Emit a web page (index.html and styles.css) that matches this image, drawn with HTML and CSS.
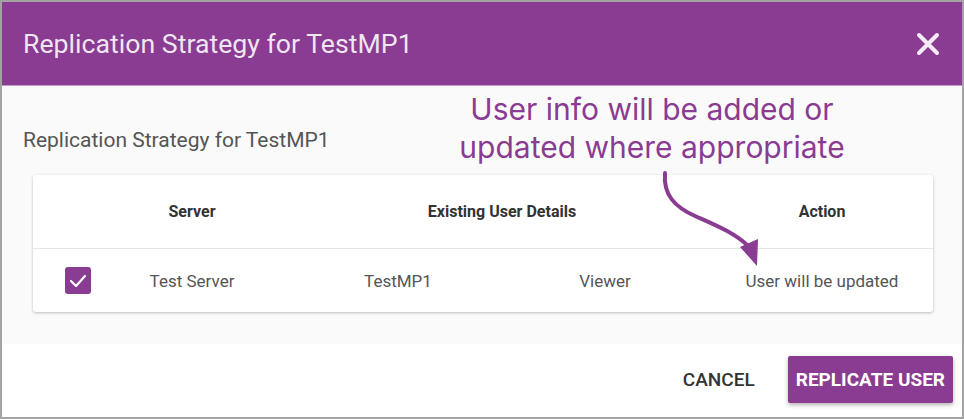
FILE: index.html
```html
<!DOCTYPE html>
<html lang="en">
<head>
  <meta charset="UTF-8">
  <title>Replication Strategy for TestMP1</title>
  <link rel="stylesheet" href="styles.css">
</head>
<body>
  <div class="dialog">
    <div class="dialog-header">
      <h1>Replication Strategy for TestMP1</h1>
      <button class="close-btn" aria-label="Close">
        <svg width="24" height="24" viewBox="0 0 24 24"><path d="M3 3L21 21M21 3L3 21" stroke="currentColor" stroke-width="4" stroke-linecap="round"/></svg>
      </button>
    </div>

    <div class="dialog-body">
      <p class="subtitle">Replication Strategy for TestMP1</p>

      <div class="card">
        <div class="card-head">
          <span></span>
          <span>Server</span>
          <span>Existing User Details</span>
          <span class="action-head">Action</span>
        </div>
        <div class="card-row">
          <span class="check">
            <svg width="26" height="27" viewBox="0 0 26 27"><rect x="0" y="0" width="26" height="27" rx="3" fill="#8a3b92"/><path d="M6 14L11 19L20 9" fill="none" stroke="#fff" stroke-width="2.2" stroke-linecap="round" stroke-linejoin="round"/></svg>
          </span>
          <span>Test Server</span>
          <span>TestMP1</span>
          <span>Viewer</span>
          <span class="action-cell">User will be updated</span>
        </div>
      </div>

      <!-- callout drawn over the screenshot -->
      <div class="callout">User info will be added or<br>updated where appropriate</div>
      <svg class="callout-arrow" width="120" height="100" viewBox="0 0 120 100">
        <path d="M25 3 C23 25 35 37 55 46 C75 55 95 63 108 76" fill="none" stroke="#8a3b92" stroke-width="4" stroke-linecap="round"/>
        <path d="M100 77 L118 69 L117 96 Z" fill="#8a3b92"/>
      </svg>
    </div>

    <div class="dialog-footer">
      <button class="btn-text">CANCEL</button>
      <button class="btn-primary">REPLICATE USER</button>
    </div>
  </div>
</body>
</html>
```

FILE: styles.css
```css
* {
  box-sizing: border-box;
}
body {
  margin: 0;
  font-family: Roboto, "Liberation Sans", sans-serif;
  background: #a3a3a3;
}
.dialog {
  width: 964px;
  height: 419px;
  border: 2px solid #a3a3a3;
  display: flex;
  flex-direction: column;
  background: #fff;
}
.dialog-header {
  height: 84px;
  background: #8a3b92;
  border-bottom: 1px solid #c69bcb;
  display: flex;
  align-items: center;
  justify-content: space-between;
  padding: 0 22px 0 21px;
}
.dialog-header h1 {
  margin: 0;
  font-size: 26.7px;
  font-weight: 400;
  color: rgba(255, 255, 255, 0.88);
}
.close-btn {
  border: none;
  background: none;
  padding: 0;
  color: rgba(255, 255, 255, 0.9);
  display: flex;
}
.dialog-body {
  position: relative;
  background: #fafafa;
  height: 258px;
  padding: 0 29px 0 21px;
  display: flex;
  flex-direction: column;
}
.subtitle {
  margin: 0;
  padding-top: 41px;
  font-size: 21px;
  line-height: 26px;
  color: #555;
}
.card {
  margin: 22px 0 0 10px;
  background: #fff;
  border-radius: 3px;
  box-shadow: 0 1px 3px rgba(0, 0, 0, 0.25);
}
.card-head {
  display: grid;
  grid-template-columns: 90px 138px 482px 1fr;
  height: 74px;
  align-items: center;
  border-bottom: 1px solid #e6e6e6;
  font-size: 16px;
  font-weight: 700;
  color: #333;
  text-align: center;
}
.action-head {
  padding-right: 32px;
}
.card-row {
  display: grid;
  grid-template-columns: 90px 138px 274px 140px 1fr;
  height: 63px;
  align-items: center;
  font-size: 17px;
  color: #555;
  text-align: center;
}
.check {
  display: flex;
  justify-content: center;
}
.action-cell {
  padding-left: 36px;
}
.callout {
  position: absolute;
  left: 420px;
  top: 4px;
  width: 460px;
  text-align: center;
  font-family: Inter, sans-serif;
  font-size: 30px;
  line-height: 38px;
  color: #8a3b92;
}
.callout-arrow {
  position: absolute;
  left: 638px;
  top: 84px;
}
.dialog-footer {
  flex: 1;
  display: flex;
  align-items: center;
  justify-content: flex-end;
  padding: 0 9px 2px 0;
  gap: 17px;
}
.btn-text {
  border: none;
  background: none;
  font-family: Roboto, sans-serif;
  font-size: 19px;
  font-weight: 500;
  color: #333;
  padding: 0 16px;
}
.btn-primary {
  border: none;
  height: 47px;
  padding: 0 8px;
  border-radius: 2px;
  background: #8a3b92;
  color: #fff;
  font-family: Roboto, sans-serif;
  font-size: 19px;
  font-weight: 700;
  box-shadow: 0 2px 4px rgba(0, 0, 0, 0.3);
}
```
